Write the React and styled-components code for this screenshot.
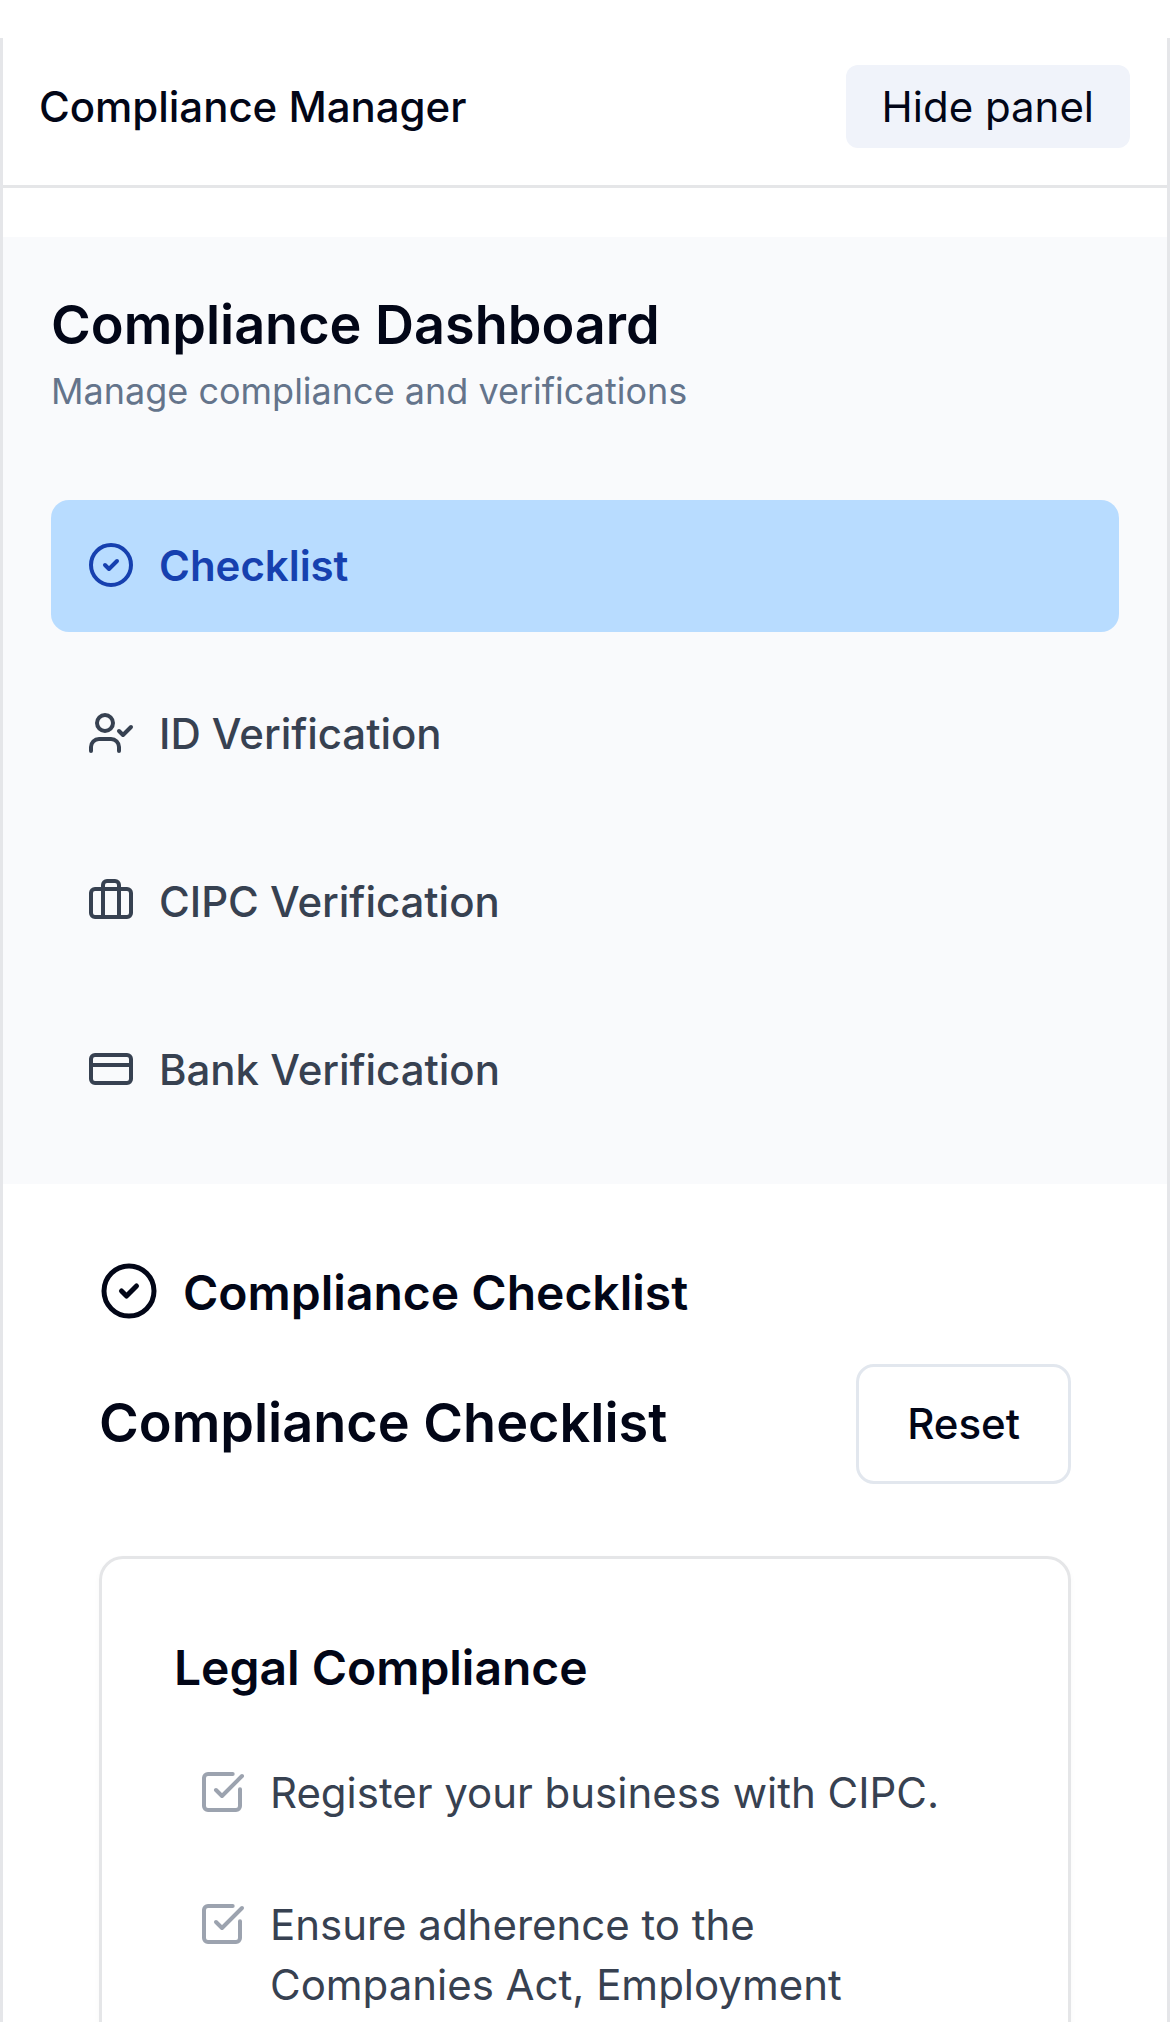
import React from "react";
import styled, { createGlobalStyle } from "styled-components";
import { Briefcase, CircleCheck, CreditCard, SquareCheckBig, UserCheck } from "lucide-react";

const GlobalStyle = createGlobalStyle`
	* {
		box-sizing: border-box;
	}

	body {
		margin: 0;
		background: #ffffff;
		color: #020617;
		font-family: Inter, "Liberation Sans", sans-serif;
		font-size: 42px;
		line-height: 60px;
		letter-spacing: -0.02px;
	}

	h1, h2, h3, p, ul {
		margin: 0;
		padding: 0;
	}

	button {
		font-family: inherit;
		letter-spacing: inherit;
		color: inherit;
	}

	svg {
		flex-shrink: 0;
	}
`;

const Page = styled.div`
	height: 2022px;
	padding-top: 38px;
	overflow: hidden;
`;

const Panel = styled.div`
	height: 2200px;
	border: 3px solid #e5e6e9;
	border-top: 0;
`;

const PanelHeader = styled.header`
	display: flex;
	align-items: flex-start;
	justify-content: space-between;
	height: 150px;
	padding: 27px 37px 0 36px;
	border-bottom: 3px solid #e5e6e8;
`;

const PanelTitle = styled.h1`
	padding: 12px 0;
	font-size: 42px;
	font-weight: 500;
	line-height: 60px;
	letter-spacing: -0.04px;
`;

const HideButton = styled.button`
	padding: 12px 36px 11px;
	border: 0;
	border-radius: 12px;
	background: #f0f3fa;
	font-size: 42px;
	line-height: 60px;
`;

const Sidebar = styled.aside`
	margin-top: 49px;
	padding: 48px;
	background: #f9fafc;
`;

const SidebarHeader = styled.div`
	height: 215px;
`;

const SidebarTitle = styled.h2`
	font-size: 54px;
	font-weight: 600;
	line-height: 80px;
`;

const SidebarText = styled.p`
	margin-top: 2px;
	color: #64748b;
	font-size: 36px;
	line-height: 48px;
	letter-spacing: 0;
`;

const Nav = styled.nav`
	display: flex;
	flex-direction: column;
	gap: 36px;
`;

const NavItem = styled.button`
	display: flex;
	align-items: center;
	gap: 24px;
	height: 132px;
	padding: 0 36px;
	border: 0;
	border-radius: 18px;
	background: ${(props) => (props.$active ? "#b8dcff" : "transparent")};
	color: ${(props) => (props.$active ? "#1640af" : "#374151")};
	font-size: 42px;
	font-weight: ${(props) => (props.$active ? 600 : 500)};
	line-height: 60px;
	letter-spacing: -0.04px;

	svg {
		margin-bottom: 2px;
	}
`;

const Content = styled.main`
	padding: 72px 96px;
`;

const SectionLabel = styled.h2`
	display: flex;
	align-items: center;
	gap: 24px;
	height: 72px;
	font-size: 48px;
	font-weight: 600;
	line-height: 72px;
	letter-spacing: 0;

	svg {
		margin-bottom: 2px;
	}

	span {
		padding-top: 2px;
	}
`;

const SectionHeader = styled.div`
	display: flex;
	align-items: center;
	justify-content: space-between;
	margin-top: 36px;
`;

const SectionTitle = styled.h2`
	padding-bottom: 2px;
	font-size: 54px;
	font-weight: 600;
	line-height: 84px;
	letter-spacing: 0;
`;

const ResetButton = styled.button`
	height: 120px;
	padding: 0 48px;
	border: 3px solid #e2e7ee;
	border-radius: 18px;
	background: #ffffff;
	font-size: 42px;
	font-weight: 500;
	line-height: 60px;
`;

const Card = styled.section`
	height: 800px;
	margin-top: 72px;
	padding: 72px;
	border: 3px solid #e5e6e8;
	border-radius: 24px;
	box-shadow: 0 3px 6px rgba(0, 0, 0, 0.03);
`;

const CardTitle = styled.h3`
	height: 72px;
	font-size: 48px;
	font-weight: 600;
	line-height: 74px;
`;

const Checklist = styled.ul`
	display: flex;
	flex-direction: column;
	gap: 24px;
	margin-top: 36px;
	list-style: none;
`;

const ChecklistItem = styled.li`
	display: flex;
	align-items: flex-start;
	gap: 24px;
	padding: 24px;
	color: #374151;

	svg {
		margin-top: 5px;
		color: #9ca3af;
	}
`;

const navItems = [
	{ label: "Checklist", icon: CircleCheck, active: true },
	{ label: "ID Verification", icon: UserCheck },
	{ label: "CIPC Verification", icon: Briefcase },
	{ label: "Bank Verification", icon: CreditCard },
];

const legalItems = [
	"Register your business with CIPC.",
	"Ensure adherence to the Companies Act, Employment",
];

export default function App() {
	return (
		<Page>
			<GlobalStyle />
			<Panel>
				<PanelHeader>
					<PanelTitle>Compliance Manager</PanelTitle>
					<HideButton>Hide panel</HideButton>
				</PanelHeader>

				<Sidebar>
					<SidebarHeader>
						<SidebarTitle>Compliance Dashboard</SidebarTitle>
						<SidebarText>Manage compliance and verifications</SidebarText>
					</SidebarHeader>
					<Nav>
						{navItems.map(({ label, icon: Icon, active }) => (
							<NavItem key={label} $active={active}>
								<Icon size={48} />
								{label}
							</NavItem>
						))}
					</Nav>
				</Sidebar>

				<Content>
					<SectionLabel>
						<CircleCheck size={60} />
						<span>Compliance Checklist</span>
					</SectionLabel>
					<SectionHeader>
						<SectionTitle>Compliance Checklist</SectionTitle>
						<ResetButton>Reset</ResetButton>
					</SectionHeader>

					<Card>
						<CardTitle>Legal Compliance</CardTitle>
						<Checklist>
							{legalItems.map((item) => (
								<ChecklistItem key={item}>
									<SquareCheckBig size={48} />
									<span>{item}</span>
								</ChecklistItem>
							))}
						</Checklist>
					</Card>
				</Content>
			</Panel>
		</Page>
	);
}
